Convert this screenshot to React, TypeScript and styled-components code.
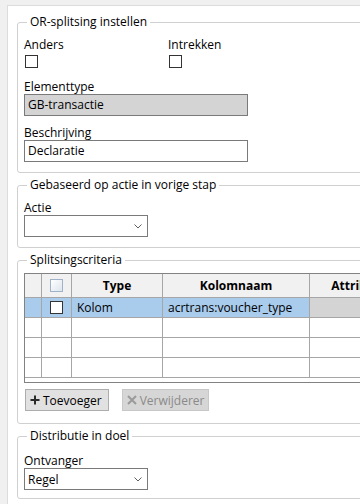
import React from 'react';
import styled, { createGlobalStyle } from 'styled-components';

const GlobalStyle = createGlobalStyle`
  html, body { margin: 0; padding: 0; }
  body {
    background: #f0f0f0;
    font-family: "Open Sans", "Noto Sans", sans-serif;
    font-size: 12px;
    color: #000;
  }
`;

const Frame = styled.div`
  margin: 5px 0 0 7px;
  height: 499px;
  box-sizing: border-box;
  background: #fff;
  border-top: 1px solid #dcdcdc;
  border-left: 1px solid #dcdcdc;
  overflow: hidden;
  padding: 8px 0 0 9px;
`;

const Group = styled.fieldset<{ $padTop?: number; $padBottom?: number }>`
  margin: 0 -24px 4px 0;
  padding: ${p => p.$padTop ?? 7}px 6px ${p => p.$padBottom ?? 10}px 6px;
  border: 1px solid #d0d0d0;
  border-radius: 3px;
  min-width: 0;
`;

const Legend = styled.legend`
  margin-left: 3px;
  padding: 0 3px;
  line-height: 16px;
`;

const CheckRow = styled.div`
  display: grid;
  grid-template-columns: 144px 1fr;
`;

const CheckLabel = styled.div`
  line-height: 16px;
`;

const Box = styled.span<{ $faded?: boolean }>`
  display: block;
  width: 13px;
  height: 13px;
  box-sizing: border-box;
  border: 1px solid ${p => (p.$faded ? '#9fb2c8' : '#333')};
  background: ${p => (p.$faded ? 'linear-gradient(135deg, #ffffff, #dde5ee)' : '#fff')};
`;

const CheckWrap = styled.div`
  margin: 2px 0 0 1px;
`;

const Field = styled.div<{ $top: number }>`
  margin-top: ${p => p.$top}px;
`;

const Label = styled.div`
  line-height: 14px;
`;

const TextInput = styled.div<{ $readonly?: boolean }>`
  width: 224px;
  height: 22px;
  box-sizing: border-box;
  border: 1px solid #7a7a7a;
  background: ${p => (p.$readonly ? '#d4d4d4' : '#fff')};
  padding: 0 3px;
  line-height: 20px;
`;

const Select = styled.div`
  width: 124px;
  height: 22px;
  box-sizing: border-box;
  border: 1px solid #7a7a7a;
  background: #fff;
  display: flex;
  align-items: center;
  justify-content: space-between;
  padding: 0 5px 0 3px;
`;

const TableBox = styled.div`
  height: 110px;
  box-sizing: border-box;
  border: 1px solid #828282;
  overflow: hidden;
`;

const Row = styled.div<{ $head?: boolean; $height: number }>`
  display: grid;
  grid-template-columns: 17px 30px 91px 147px 100px;
  height: ${p => p.$height}px;
  box-sizing: border-box;
  border-bottom: 1px solid #a6a6a6;
  font-weight: ${p => (p.$head ? 700 : 400)};
`;

const Cell = styled.div<{ $bg?: string; $center?: boolean }>`
  border-right: 1px solid #a6a6a6;
  background: ${p => p.$bg ?? '#fff'};
  display: flex;
  align-items: center;
  justify-content: ${p => (p.$center ? 'center' : 'flex-start')};
  padding-left: ${p => (p.$center ? 0 : 5)}px;
  white-space: nowrap;
  overflow: hidden;
`;

const ButtonRow = styled.div`
  display: flex;
  gap: 13px;
  margin: 6px 0 0 1px;
`;

const Button = styled.button<{ $off?: boolean }>`
  height: 22px;
  box-sizing: border-box;
  display: inline-flex;
  align-items: center;
  gap: 3px;
  padding: 0 ${p => (p.$off ? 4 : 6)}px 0 4px;
  font: inherit;
  color: ${p => (p.$off ? '#8a8a8a' : '#000')};
  background: ${p => (p.$off ? '#d6d6d6' : '#e1e1e1')};
  border: 1px solid ${p => (p.$off ? '#c8c8c8' : '#adadad')};
  border-radius: 0;
`;

const Chevron = () => (
  <svg width="8" height="5" viewBox="0 0 8 5">
    <path d="M0.5 0.5 L4 4 L7.5 0.5" fill="none" stroke="#606060" strokeWidth="1" />
  </svg>
);

const PlusIcon = () => (
  <svg width="10" height="10" viewBox="0 0 10 10">
    <path d="M5 0.5 V9.5 M0.5 5 H9.5" stroke="#2b2b2b" strokeWidth="2" />
  </svg>
);

const CrossIcon = () => (
  <svg width="10" height="10" viewBox="0 0 10 10">
    <path d="M1 1 L9 9 M9 1 L1 9" stroke="#9a9a9a" strokeWidth="2" />
  </svg>
);

const SELECTED = '#a9cbec';
const HEAD = '#f1f1f1';

export default function App() {
  const emptyRows = [0, 1, 2];
  return (
    <>
      <GlobalStyle />
      <Frame>
        <Group>
          <Legend>OR-splitsing instellen</Legend>
          <CheckRow>
            <div>
              <CheckLabel>Anders</CheckLabel>
              <CheckWrap><Box /></CheckWrap>
            </div>
            <div>
              <CheckLabel>Intrekken</CheckLabel>
              <CheckWrap><Box /></CheckWrap>
            </div>
          </CheckRow>
          <Field $top={12}>
            <Label>Elementtype</Label>
            <TextInput $readonly>GB-transactie</TextInput>
          </Field>
          <Field $top={10}>
            <Label>Beschrijving</Label>
            <TextInput>Declaratie</TextInput>
          </Field>
        </Group>

        <Group $padTop={8}>
          <Legend>Gebaseerd op actie in vorige stap</Legend>
          <Label>Actie</Label>
          <Select>
            <span />
            <Chevron />
          </Select>
        </Group>

        <Group $padTop={5} $padBottom={12}>
          <Legend>Splitsingscriteria</Legend>
          <TableBox>
            <Row $head $height={24}>
              <Cell $bg={HEAD} />
              <Cell $bg={HEAD} $center><Box $faded /></Cell>
              <Cell $bg={HEAD} $center>Type</Cell>
              <Cell $bg={HEAD} $center>Kolomnaam</Cell>
              <Cell $bg={HEAD} $center>Attribuut</Cell>
            </Row>
            <Row $height={20}>
              <Cell $bg={SELECTED} />
              <Cell $bg={SELECTED} $center><Box /></Cell>
              <Cell $bg={SELECTED}>Kolom</Cell>
              <Cell $bg={SELECTED}>acrtrans:voucher_type</Cell>
              <Cell $bg="#d4d4d4" />
            </Row>
            {emptyRows.map(i => (
              <Row key={'row-' + i} $height={20}>
                <Cell />
                <Cell />
                <Cell />
                <Cell />
                <Cell />
              </Row>
            ))}
          </TableBox>
          <ButtonRow>
            <Button><PlusIcon />Toevoeger</Button>
            <Button $off disabled><CrossIcon />Verwijderer</Button>
          </ButtonRow>
        </Group>

        <Group $padTop={10} $padBottom={8}>
          <Legend>Distributie in doel</Legend>
          <Label>Ontvanger</Label>
          <Select>
            <span>Regel</span>
            <Chevron />
          </Select>
        </Group>
      </Frame>
    </>
  );
}
